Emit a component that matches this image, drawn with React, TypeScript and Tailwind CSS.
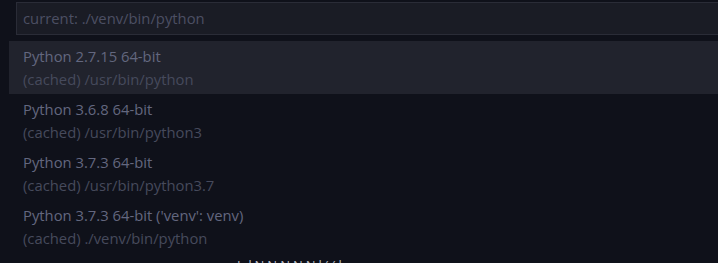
import * as React from 'react';

type Interpreter = {
    label: string;
    path: string;
};

const interpreters: Interpreter[] = [
    { label: 'Python 2.7.15 64-bit', path: '(cached) /usr/bin/python' },
    { label: 'Python 3.6.8 64-bit', path: '(cached) /usr/bin/python3' },
    { label: 'Python 3.7.3 64-bit', path: '(cached) /usr/bin/python3.7' },
    { label: "Python 3.7.3 64-bit ('venv': venv)", path: '(cached) ./venv/bin/python' },
];

const PickerRow: React.FC<{ item: Interpreter; active?: boolean }> = ({ item, active }) => {
    return (
        <div className={`flex h-[53px] flex-col justify-center pl-[14px] ${active ? 'bg-[#21232d]' : ''}`}>
            <div className="text-[14.8px] leading-[23px] text-[#63677f]">{item.label}</div>
            <div className="text-[14.8px] leading-[23px] text-[#464a5c]">{item.path}</div>
        </div>
    );
};

export default function App() {
    return (
        <div
            className="relative h-[263px] w-[718px] overflow-hidden bg-[#0f111a]"
            style={{ fontFamily: '"Open Sans", "Noto Sans", sans-serif' }}
        >
            <div className="pl-4 pt-[2px]">
                <div className="flex h-[33px] items-center border border-r-0 border-[#2a2c37] bg-[#1a1c25] pl-[6px]">
                    <span className="text-[14.8px] text-[#4c4f63]">current: ./venv/bin/python</span>
                </div>
            </div>
            <div className="mt-[6px] pl-[9px]">
                {interpreters.map((item, i) => (
                    <PickerRow key={item.path} item={item} active={i === 0} />
                ))}
            </div>
            <div className="pl-[237px] pt-[6px] text-[13px] leading-none tracking-[3px] text-[#b9bac4]">
                IdNNNNNl((l
            </div>
        </div>
    );
}
